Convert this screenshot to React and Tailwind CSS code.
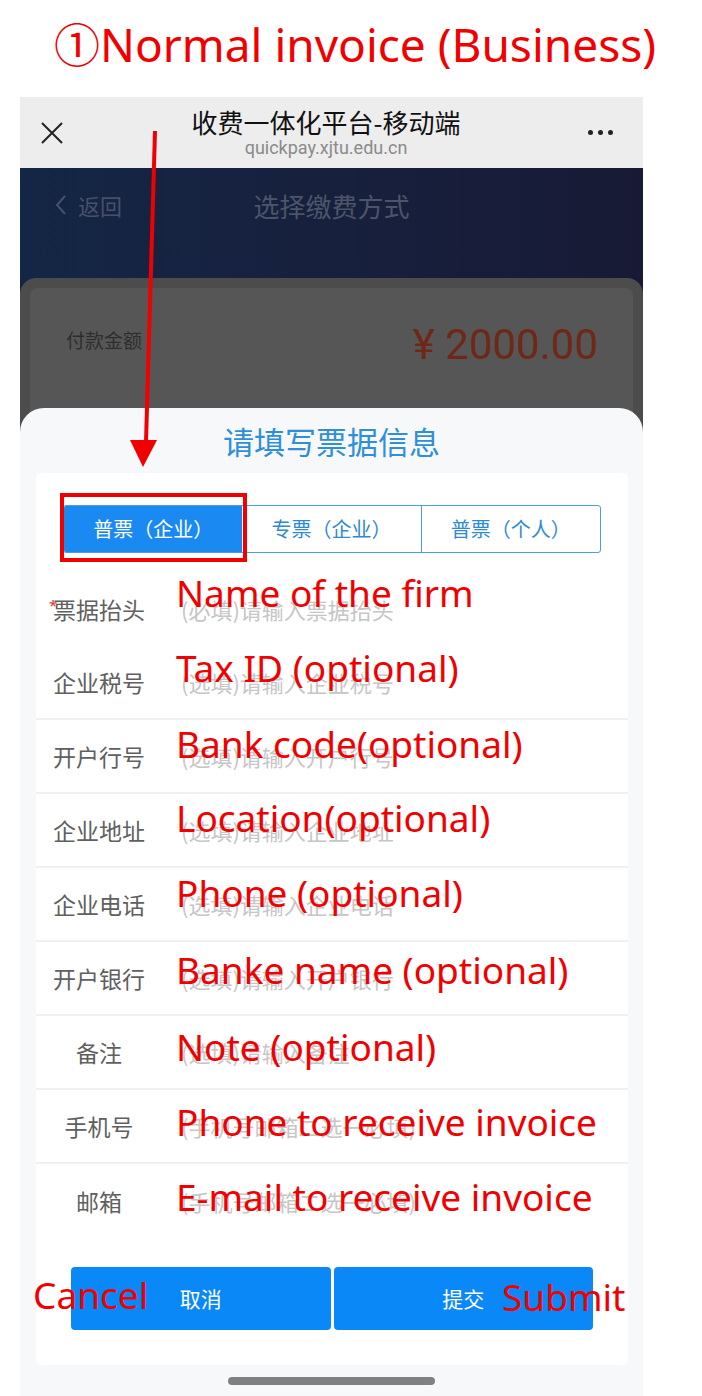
import React from 'react';

const cjk = "font-['Noto_Sans_CJK_SC',sans-serif]";
const latin = "font-['Noto_Sans','Noto_Sans_CJK_SC',sans-serif]";

// rows of the invoice form; note = red English annotation laid over the row
const rows = [
  { label: '票据抬头', ph: '(必填)请输入票据抬头', note: 'Name of the firm', top: 'top-[2px]', req: true, line: false },
  { label: '企业税号', ph: '(选填)请输入企业税号', note: 'Tax ID (optional)', top: 'top-[3px]', line: true },
  { label: '开户行号', ph: '(选填)请输入开户行号', note: 'Bank code(optional)', top: 'top-[5px]', line: true },
  { label: '企业地址', ph: '(选填)请输入企业地址', note: 'Location(optional)', top: 'top-[5px]', line: true },
  { label: '企业电话', ph: '(选填)请输入企业电话', note: 'Phone (optional)', top: 'top-[6px]', line: true },
  { label: '开户银行', ph: '(选填)请输入开户银行', note: 'Banke name (optional)', top: 'top-[9px]', line: true },
  { label: '备注', ph: '(选填)请输入备注', note: 'Note (optional)', top: 'top-[12px]', line: true },
  { label: '手机号', ph: '(手机号邮箱二选一必填)', note: 'Phone to receive invoice', top: 'top-[13px]', line: true },
  { label: '邮箱', ph: '(手机号邮箱二选一必填)', note: 'E-mail to receive invoice', top: 'top-[14px]', line: false },
];

const tabs = ['普票（企业）', '专票（企业）', '普票（个人）'];

const FormRow = ({ row }) => (
  <div className={`relative flex items-center h-[74px] ${row.line ? 'border-b-2 border-[#f0f0f0]' : ''}`}>
    {row.req && <span className="absolute left-[13px] top-[26px] text-[15px] leading-none text-[#e03030]">*</span>}
    <div className={`ml-[15px] w-[96px] text-center text-[23px] text-[#606060] ${cjk}`}>{row.label}</div>
    <div className={`ml-[34px] text-[22px] text-[#c6c6c6] whitespace-nowrap ${cjk}`}>{row.ph}</div>
    <span className={`absolute left-[140px] ${row.top} text-[37px] leading-none text-[#f00000] whitespace-nowrap ${latin}`}>
      {row.note}
    </span>
  </div>
);

export default function App() {
  return (
    <div className="relative w-[702px] h-[1396px] bg-white overflow-hidden">
      {/* heading */}
      <div className="h-[97px] flex items-center justify-center pl-[8px] pb-[10px]">
        <h1 className={`text-[46px] leading-none text-[#f00000] ${latin}`}>①Normal invoice (Business)</h1>
      </div>

      {/* phone screenshot */}
      <div className="ml-[20px] w-[623px] h-[1299px] flex flex-col">
        <div className="h-[71px] bg-[#ededed] flex items-center px-[20px]">
          <svg width="24" height="24" viewBox="0 0 24 24" className="shrink-0">
            <path d="M2 2 L22 22 M22 2 L2 22" stroke="#222" strokeWidth="2" fill="none" />
          </svg>
          <div className="flex-1 flex flex-col items-center pb-[2px]">
            <div className={`text-[26px] leading-[32px] text-[#111] ${cjk}`}>收费一体化平台-移动端</div>
            <div className="text-[18px] leading-[20px] text-[#8a8a8a] font-['Roboto',sans-serif]">quickpay.xjtu.edu.cn</div>
          </div>
          <div className="flex gap-[5px] mr-[10px]">
            <span className="w-[5px] h-[5px] rounded-full bg-[#222]" />
            <span className="w-[5px] h-[5px] rounded-full bg-[#222]" />
            <span className="w-[5px] h-[5px] rounded-full bg-[#222]" />
          </div>
        </div>

        <div className="relative flex-1 bg-gradient-to-r from-[#142645] to-[#181a35]">
          {/* dimmed page behind the sheet */}
          <div className="h-[78px] flex items-center pb-[4px] relative">
            <div className={`absolute left-[34px] flex items-center gap-[10px] text-[22px] text-[#46506a] ${cjk}`}>
              <svg width="14" height="22" viewBox="0 0 14 22">
                <path d="M11 2 L3 11 L11 20" stroke="#46506a" strokeWidth="2" fill="none" />
              </svg>
              返回
            </div>
            <div className={`flex-1 text-center text-[26px] text-[#4c546a] ${cjk}`}>选择缴费方式</div>
          </div>
          <div className="mt-[32px] h-[300px] rounded-t-[16px] bg-[#4c4c4c] p-[10px]">
            <div className="h-full rounded-[8px] bg-[#565656] flex items-start justify-between pl-[36px] pr-[35px] pt-[36px]">
              <span className={`text-[19px] text-[#2e2e2e] mt-[2px] ${cjk}`}>付款金额</span>
              <span className="text-[42px] leading-none text-[#6e2818] font-['Roboto',sans-serif]">¥ 2000.00</span>
            </div>
          </div>

          {/* bottom sheet */}
          <div className="absolute left-0 right-0 top-[240px] bottom-0 rounded-t-[24px] bg-[#f7f8fa] flex flex-col">
            <div className={`h-[65px] flex items-center justify-center text-[31px] text-[#2f8fd8] pt-[2px] ${cjk}`}>请填写票据信息</div>
            <div className="ml-[16px] mr-[15px] h-[892px] bg-white rounded-[6px] pt-[32px]">
              <div className="mx-[27px] flex h-[48px] border border-[#4a9fe0] rounded-[3px] overflow-hidden">
                {tabs.map((t, i) => (
                  <div
                    key={t}
                    className={`flex-1 flex items-center justify-center text-[20px] ${cjk} ${
                      i === 0 ? 'bg-[#1a8af2] text-white' : 'text-[#2f8ad4]'
                    } ${i === 2 ? 'border-l border-[#4a9fe0]' : ''}`}
                  >
                    {t}
                  </div>
                ))}
              </div>

              <div className="mt-[19px]">
                {rows.map((r) => (
                  <FormRow key={r.label} row={r} />
                ))}
              </div>

              <div className="relative mt-[29px] mx-[35px] flex gap-[3px] h-[63px]">
                <button className={`flex-1 rounded-[4px] bg-[#0a88f7] text-white text-[21px] ${cjk}`}>取消</button>
                <button className={`flex-1 rounded-[4px] bg-[#0a88f7] text-white text-[21px] ${cjk}`}>提交</button>
                <span className={`absolute left-[-38px] top-[9px] text-[37px] leading-none text-[#f00000] ${latin}`}>Cancel</span>
                <span className={`absolute left-[431px] top-[11px] text-[37px] leading-none text-[#f00000] ${latin}`}>Submit</span>
              </div>
            </div>
            <div className="flex-1 flex items-center justify-center">
              <span className="w-[207px] h-[8px] rounded-full bg-[#808080]" />
            </div>
          </div>
        </div>
      </div>

      {/* red annotations over the screenshot */}
      <svg className="absolute left-0 top-0 pointer-events-none" width="702" height="600">
        <path d="M155 131 L146 442" stroke="#f00000" strokeWidth="4" />
        <path d="M130 440 L157 440 L143 467 Z" fill="#f00000" />
      </svg>
      <div className="absolute left-[60px] top-[493px] w-[187px] h-[69px] border-[4px] border-[#f00000] pointer-events-none" />
    </div>
  );
}
